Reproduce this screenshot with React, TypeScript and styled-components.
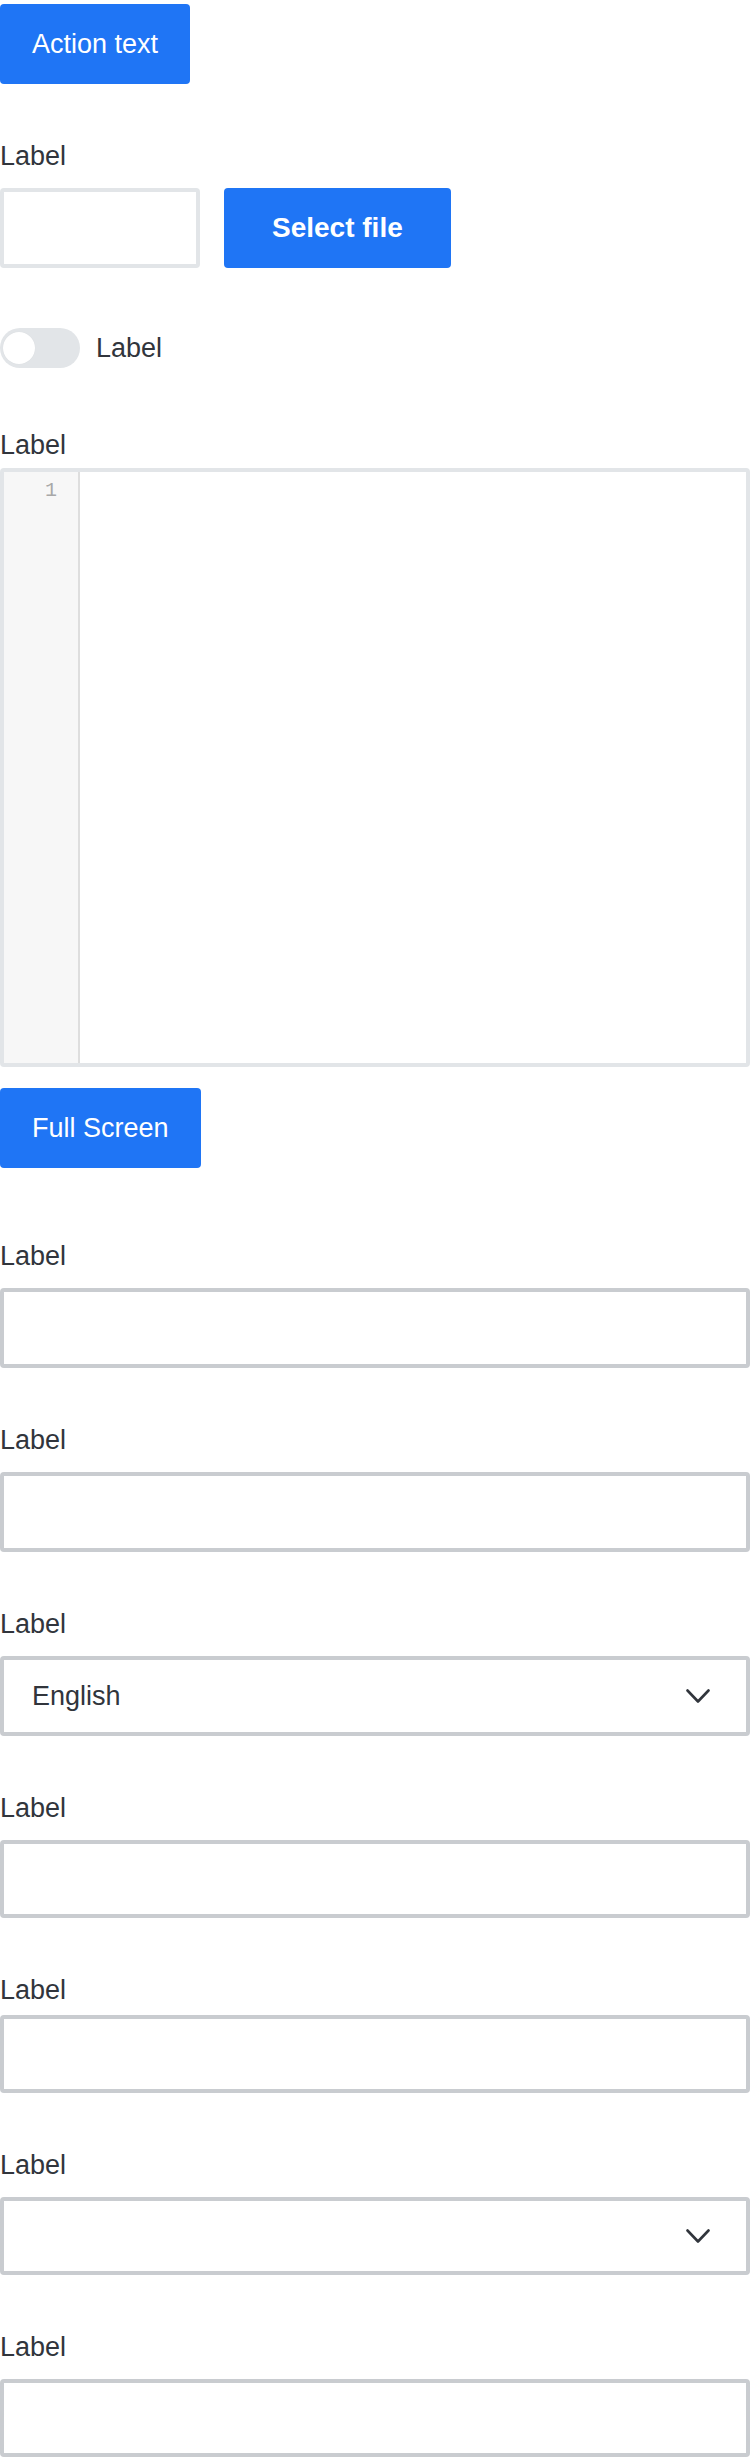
import React from "react";
import styled, { createGlobalStyle } from "styled-components";

const GlobalStyle = createGlobalStyle`
  html, body {
    margin: 0;
    padding: 0;
    background: #ffffff;
    overflow: hidden;
  }
  body {
    font-family: "Liberation Sans", Arial, Helvetica, sans-serif;
    color: #31353c;
  }
  * { box-sizing: border-box; }
`;

const Page = styled.div`
  display: flex;
  flex-direction: column;
  align-items: stretch;
  width: 750px;
  padding-top: 4px;
`;

const PrimaryButton = styled.button<{ $bold?: boolean; $pad?: number; $mt?: number }>`
  align-self: flex-start;
  flex: none;
  height: 80px;
  margin: ${(p) => p.$mt ?? 0}px 0 0 0;
  padding: 0 ${(p) => p.$pad ?? 32}px;
  border: none;
  border-radius: 4px;
  background: #1f75f5;
  color: #ffffff;
  font-family: "Liberation Sans", Arial, Helvetica, sans-serif;
  font-size: ${(p) => (p.$bold ? 28 : 27)}px;
  font-weight: ${(p) => (p.$bold ? 700 : 400)};
  line-height: 32px;
  cursor: pointer;
`;

const Field = styled.div<{ $mt: number }>`
  display: flex;
  flex-direction: column;
  margin-top: ${(p) => p.$mt}px;
`;

const Label = styled.label<{ $mb: number }>`
  display: block;
  font-size: 27px;
  line-height: 32px;
  color: #31353c;
  margin-bottom: ${(p) => p.$mb}px;
`;

const FileRow = styled.div`
  display: flex;
  align-items: center;
  gap: 24px;
`;

const FileName = styled.input`
  width: 200px;
  height: 80px;
  border: 4px solid #e2e5e8;
  border-radius: 4px;
  background: #fff;
  outline: none;
  padding: 0 16px;
  font-size: 27px;
  font-family: inherit;
`;

const ToggleRow = styled.div`
  display: flex;
  align-items: center;
  gap: 16px;
  margin-top: 60px;
`;

const ToggleTrack = styled.div`
  width: 80px;
  height: 40px;
  border-radius: 20px;
  background: #e2e5e8;
  display: flex;
  align-items: center;
  padding: 0 3px;
`;

const ToggleKnob = styled.span`
  width: 32px;
  height: 32px;
  border-radius: 50%;
  background: #ffffff;
  box-shadow: 0 0 1px rgba(0, 0, 0, 0.08);
`;

const ToggleText = styled.span`
  font-size: 27px;
  line-height: 32px;
  color: #31353c;
`;

const Editor = styled.div`
  display: flex;
  height: 599px;
  border: 4px solid #e2e5e8;
  border-radius: 4px;
  background: #fff;
  overflow: hidden;
`;

const Gutter = styled.div`
  width: 76px;
  flex: none;
  background: #f7f7f7;
  border-right: 2px solid #dedede;
  padding: 7px 21px 0 0;
  text-align: right;
  font-family: "Liberation Mono", "DejaVu Sans Mono", monospace;
  font-size: 20px;
  line-height: 24px;
  color: #a8a8a8;
`;

const EditorBody = styled.div`
  flex: 1;
`;

const TextInput = styled.input<{ $h: number }>`
  width: 100%;
  height: ${(p) => p.$h}px;
  border: 4px solid #c9ccd0;
  border-radius: 4px;
  background: #fff;
  outline: none;
  padding: 0 28px;
  font-size: 27px;
  font-family: inherit;
  color: #31353c;
`;

const SelectBox = styled.div<{ $h: number }>`
  width: 100%;
  height: ${(p) => p.$h}px;
  border: 4px solid #c9ccd0;
  border-radius: 4px;
  background: #fff;
  display: flex;
  align-items: center;
  justify-content: space-between;
  padding: 0 36px 0 28px;
  font-size: 27px;
  color: #31353c;
`;

const Chevron = () => (
  <svg width="24" height="15" viewBox="0 0 24 15" fill="none">
    <polyline
      points="1.5,1.5 12,12.5 22.5,1.5"
      stroke="#31353c"
      strokeWidth="2.6"
      strokeLinecap="round"
      strokeLinejoin="round"
    />
  </svg>
);

type FieldSpec =
  | { kind: "input"; mt: number; mb: number; h: number }
  | { kind: "select"; mt: number; mb: number; h: number; value: string };

const fields: FieldSpec[] = [
  { kind: "input", mt: 72, mb: 16, h: 80 },
  { kind: "input", mt: 56, mb: 16, h: 80 },
  { kind: "select", mt: 56, mb: 16, h: 80, value: "English" },
  { kind: "input", mt: 56, mb: 16, h: 78 },
  { kind: "input", mt: 56, mb: 9, h: 78 },
  { kind: "select", mt: 56, mb: 16, h: 78, value: "" },
  { kind: "input", mt: 56, mb: 16, h: 78 },
];

export default function App() {
  return (
    <>
      <GlobalStyle />
      <Page>
        <PrimaryButton>Action text</PrimaryButton>

        <Field $mt={56}>
          <Label $mb={16}>Label</Label>
          <FileRow>
            <FileName readOnly />
            <PrimaryButton $bold $pad={48}>
              Select file
            </PrimaryButton>
          </FileRow>
        </Field>

        <ToggleRow>
          <ToggleTrack>
            <ToggleKnob />
          </ToggleTrack>
          <ToggleText>Label</ToggleText>
        </ToggleRow>

        <Field $mt={61}>
          <Label $mb={7}>Label</Label>
          <Editor>
            <Gutter>1</Gutter>
            <EditorBody />
          </Editor>
        </Field>

        <PrimaryButton $mt={21}>Full Screen</PrimaryButton>

        {fields.map((f, i) => (
          <Field key={i} $mt={f.mt}>
            <Label $mb={f.mb}>Label</Label>
            {f.kind === "input" ? (
              <TextInput $h={f.h} readOnly />
            ) : (
              <SelectBox $h={f.h}>
                <span>{f.value}</span>
                <Chevron />
              </SelectBox>
            )}
          </Field>
        ))}
      </Page>
    </>
  );
}
